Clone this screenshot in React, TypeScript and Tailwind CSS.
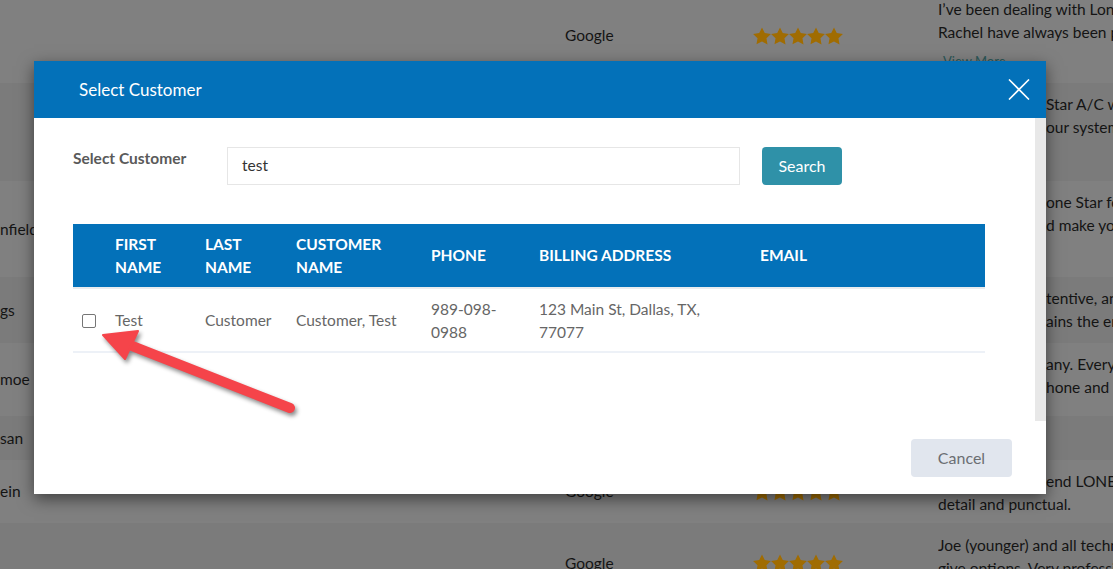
import React from "react";

function Stars() {
  return (
    <div className="flex gap-0">
      {[0, 1, 2, 3, 4].map((i) => (
        <svg key={i} width="18" height="18" viewBox="0 0 24 24">
          <path
            d="M12 .6l3.67 7.43 8.2 1.19-5.93 5.79 1.4 8.17L12 19.3l-7.34 3.86 1.4-8.17L.13 9.22l8.2-1.19z"
            fill="#a06c02"
          />
        </svg>
      ))}
    </div>
  );
}

type Row = {
  h: number;
  left?: string;
  review: { text: string; hidden?: boolean }[];
  pt?: number;
  viewMore?: boolean;
  dark?: boolean;
};

const rows: Row[] = [
  {
    h: 95,
    review: [
      { text: "I’ve been dealing with Lone Star for many years now." },
      { text: "Rachel have always been prompt and very helpful." },
    ],
    viewMore: true,
  },
  {
    h: 98,
    dark: true,
    review: [
      { text: "Star A/C was very quick to respond", hidden: true },
      { text: "our system and explained everything", hidden: true },
    ],
  },
  {
    h: 96,
    left: "nfield",
    review: [
      { text: "one Star for all of our needs", hidden: true },
      { text: "d make you feel like family", hidden: true },
    ],
  },
  {
    h: 66,
    dark: true,
    left: "gs",
    review: [
      { text: "tentive, and very professional", hidden: true },
      { text: "ains the entire process", hidden: true },
    ],
  },
  {
    h: 73,
    left: "moe",
    review: [
      { text: "any. Everyone is friendly", hidden: true },
      { text: "hone and always on time", hidden: true },
    ],
  },
  { h: 44, dark: true, left: "san", review: [] },
  {
    h: 63,
    left: "ein",
    review: [
      { text: "end LONE STAR to anyone", hidden: true },
      { text: "detail and punctual." },
    ],
  },
  {
    h: 80,
    dark: true,
    pt: 11,
    review: [
      { text: "Joe (younger) and all technicians are great." },
      { text: "give options. Very professional and friendly." },
    ],
  },
];

function Background() {
  return (
    <div className="mt-[-12px] flex flex-col text-[15.5px] leading-[23px] text-[#141414]">
      {rows.map((r, i) => (
        <div
          key={i}
          className={
            "grid grid-cols-[565px_188px_185px_1fr] " +
            (r.dark ? "bg-[#7b7b7b]" : "bg-[#808080]")
          }
          style={{ height: r.h }}
        >
          <div className="flex items-center whitespace-nowrap">{r.left}</div>
          <div className="flex items-center">Google</div>
          <div className="flex items-center">
            <Stars />
          </div>
          <div className="overflow-hidden whitespace-nowrap" style={{ paddingTop: r.pt ?? 9.5 }}>
            {r.review.map((l, j) => (
              <div key={j} className={l.hidden ? "pl-[108px]" : ""}>
                {l.text}
              </div>
            ))}
            {r.viewMore && (
              <div className="mt-[8px] pl-[5px] text-[13px] leading-[18px] text-[#2c5858]">View More</div>
            )}
          </div>
        </div>
      ))}
    </div>
  );
}

function Modal() {
  const head = "text-[15.5px] font-bold leading-[23px] text-white";
  const cell = "text-[15.5px] leading-[23px] text-[#666]";
  return (
    <div className="absolute left-[34px] top-[61px] flex h-[433px] w-[1012px] flex-col bg-white shadow-[0_5px_15px_rgba(0,0,0,0.5)]">
      <div className="flex h-[57px] items-center justify-between bg-[#0371b9] pl-[45px] pr-[16px]">
        <div className="text-[17px] leading-[24px] text-white">Select Customer</div>
        <svg width="22" height="21" viewBox="0 0 22 21">
          <path d="M1 0.5L21 20.5M21 0.5L1 20.5" stroke="white" strokeWidth="1.6" />
        </svg>
      </div>
      <div className="flex h-[303px]">
        <div className="flex-1 pl-[39px] pt-[29px]">
          <div className="flex items-start">
            <div className="w-[154px] text-[15.5px] font-bold leading-[22px] text-[#5a5a5a]">Select Customer</div>
            <div className="flex h-[38px] w-[513px] items-center border border-[#e6e6e6] pl-[14px] text-[15.5px] text-[#333]">
              test
            </div>
            <button className="ml-[22px] h-[38px] w-[80px] rounded-[4px] bg-[#2f91a8] text-[16px] text-white">
              Search
            </button>
          </div>
          <div className="mt-[39px] w-[912px]">
            <div className="grid h-[63px] grid-cols-[42px_90px_91px_135px_108px_221px_1fr] items-center bg-[#0371b9]">
              <div />
              <div className={head}>FIRST<br />NAME</div>
              <div className={head}>LAST<br />NAME</div>
              <div className={head}>CUSTOMER<br />NAME</div>
              <div className={head}>PHONE</div>
              <div className={head}>BILLING ADDRESS</div>
              <div className={head}>EMAIL</div>
            </div>
            <div className="grid h-[66px] grid-cols-[42px_90px_91px_135px_108px_221px_1fr] items-center border-t-2 border-b-2 border-t-[#e9ecef] border-b-[#edf1f7] pt-[1px]">
              <div className="pl-[9px]">
                <div className="h-[14px] w-[14px] rounded-[2px] border border-[#767676] bg-white" />
              </div>
              <div className={cell}>Test</div>
              <div className={cell}>Customer</div>
              <div className={cell}>Customer, Test</div>
              <div className={cell}>989-098-<br />0988</div>
              <div className={cell}>123 Main St, Dallas, TX,<br />77077</div>
              <div className={cell} />
            </div>
          </div>
        </div>
        <div className="w-[11px] bg-[#e8e8e8]" />
      </div>
      <div className="flex flex-1 items-start justify-end pr-[34px] pt-[18px]">
        <button className="h-[38px] w-[101px] rounded-[4px] bg-[#e1e6ee] text-[16px] text-[#6b6e73]">
          Cancel
        </button>
      </div>
    </div>
  );
}

export default function App() {
  return (
    <div className="relative h-[569px] w-[1113px] overflow-hidden bg-[#808080] font-['Lato',sans-serif]">
      <Background />
      <Modal />
      <svg
        className="pointer-events-none absolute left-0 top-0"
        width="1113"
        height="569"
        style={{ filter: "drop-shadow(2px 3px 2px rgba(0,0,0,0.45))" }}
      >
        <line x1="290" y1="408" x2="122" y2="342" stroke="#f5444a" strokeWidth="10" strokeLinecap="round" />
        <polygon points="103,335 138,331 125,359" fill="#f5444a" stroke="#f5444a" strokeWidth="2" strokeLinejoin="round" />
      </svg>
    </div>
  );
}
